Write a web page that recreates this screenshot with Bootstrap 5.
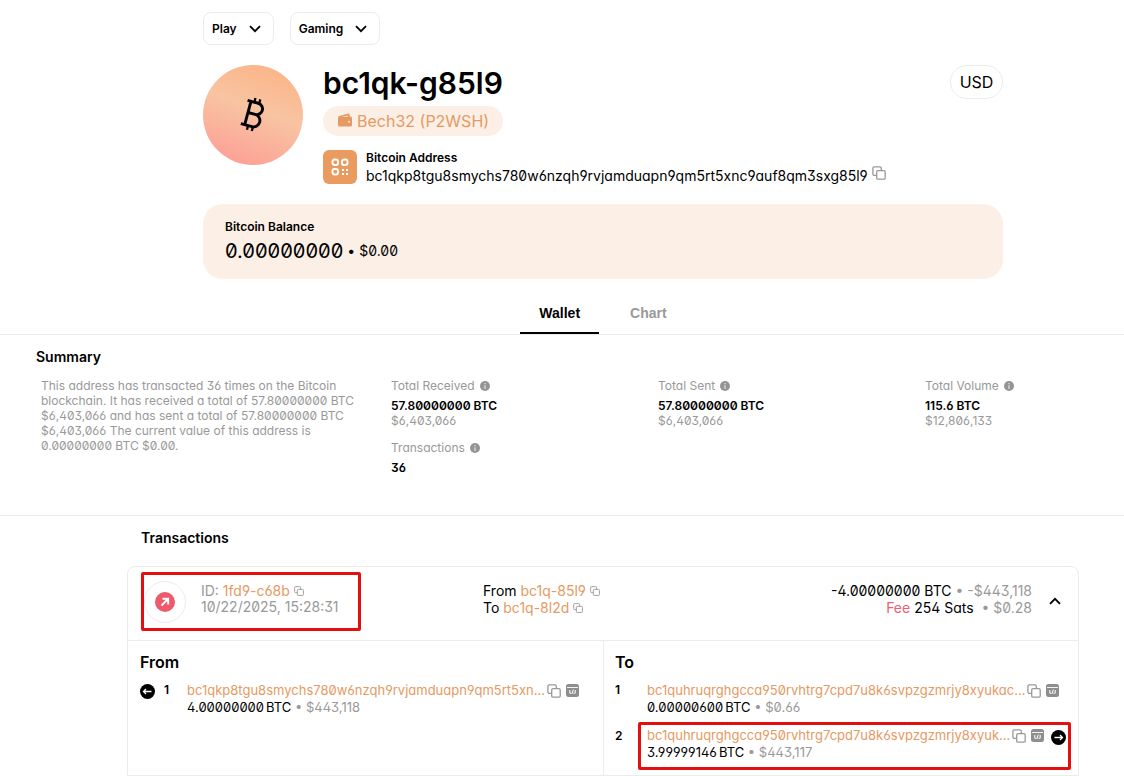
<!DOCTYPE html>
<html lang="en">
<head>
<meta charset="utf-8">
<meta name="viewport" content="width=device-width, initial-scale=1">
<title>bc1qk-g85l9 | Bitcoin Address</title>
<link href="https://cdn.jsdelivr.net/npm/bootstrap@5.3.0/dist/css/bootstrap.min.css" rel="stylesheet">
<style>
  :root { --line: #ececec; --muted: #999; --orange: #e59a63; --peach: #fcefe5; --pink: #ea5f75; }
  body { font-family: Inter, "Liberation Sans", sans-serif; color: #000; font-size: 14px; line-height: 16px; background: #fff; overflow-x: hidden; }
  a { color: var(--orange); text-decoration: none; }
  svg { display: block; flex: none; }
  .num { font-feature-settings: "zero" 1, "cv11" 1, "ss01" 1, "cv09" 1; }
  .muted { color: var(--muted); }
  .icon-btn { border: 0; background: none; padding: 0; color: var(--muted); flex: none; }
  /* content is centred in the space right of the side gutter */
  .gutter { padding-left: 82px; }
  .col-main { max-width: 800px; }
  .col-wide { max-width: 952px; }
  .fs-12 { font-size: 12px; }
  .pick { height: 33px; border: 1px solid var(--line); border-radius: 8px; background: #fff; font-size: 12px; font-weight: 600; padding: 0 12px 0 8px; gap: 12px; }
  .avatar { width: 100px; height: 100px; background: linear-gradient(20deg, #fd9d95 5%, #f8c4a2 55%, #fbb385 95%); flex: none; }
  .title { font-size: 30px; line-height: 37px; font-weight: 600; }
  .pill { height: 30px; padding: 0 14px; border-radius: 15px; background: var(--peach); color: var(--orange); font-size: 16px; gap: 4px; }
  .address { margin-top: 14px; gap: 9px; }
  .qr { width: 34px; height: 34px; border-radius: 6px; border: 0; padding: 0; background: #ea9b60; }
  .usd { height: 34px; width: 53px; border: 1px solid var(--line); border-radius: 17px; background: #fff; font-size: 16px; line-height: 30px; padding: 0; }
  .balance { background: var(--peach); border-radius: 20px; padding: 15px 22px; height: 75px; margin-top: 18px; }
  .balance-sum { gap: 4px; line-height: 32px; }
  .tabs { margin-top: 15px; border-bottom: 1px solid var(--line); }
  .tab-link { font: 700 14px/16px "Liberation Sans", sans-serif; color: var(--muted); padding: 11px 19px; border: 0; border-bottom: 2px solid transparent; background: none; }
  .tab-link.active { color: #000; border-bottom-color: #000; }
  .section-title { font-size: 14px; line-height: 17px; font-weight: 600; margin: 0; }
  .summary { padding: 13px 0 0 36px; height: 181px; border-bottom: 1px solid var(--line); }
  .stats { display: grid; grid-template-columns: 355px 267px 267px 1fr; margin-top: 13px; line-height: 15px; }
  .stats p { width: 330px; padding-left: 5px; }
  .stat-name { gap: 5px; margin-bottom: 5px; }
  .tx { border: 1px solid var(--line); border-radius: 8px 8px 0 0; }
  .tx-head { height: 74px; border-bottom: 1px solid var(--line); }
  .flagged { border: 3px solid #e60f0f; border-radius: 2px; }
  .tx-id { width: 220px; height: 59px; margin: 5px 0 0 13px; }
  .ring { width: 42px; height: 42px; margin-top: 6px; border: 1px solid var(--line); }
  .tx-mid { margin-left: 122px; }
  .tx-mid, .tx-sum { padding-top: 15px; line-height: 17px; }
  .copy-row { gap: 4px; }
  .side { height: 134px; padding: 11px 12px; }
  .side + .side { border-left: 1px solid var(--line); padding: 11px 7px 4px 11px; }
  .side h3 { font-size: 16px; line-height: 20px; font-weight: 600; margin: 0 0 10px; }
  .addr { font-size: 13px; line-height: 17px; }
  .addr-line { gap: 5px; }
  .addr-line a { margin-right: -3px; }
  .idx { font-size: 12px; line-height: 16px; font-weight: 600; }
  .sum { display: flex; gap: 2px; }
  .out-2 { height: 48px; margin-top: 6px; padding: 2px 2px 0 6px; }
</style>
</head>
<body>
<svg width="0" height="0" class="position-absolute" aria-hidden="true">
  <symbol id="copy" viewBox="0 0 14 14"><g fill="none" stroke="currentColor" stroke-width="1.3"><path d="M4.5 9.3H2.2A1.3 1.3 0 0 1 .9 8V2.2A1.3 1.3 0 0 1 2.2.9H8a1.3 1.3 0 0 1 1.3 1.3v2.3"/><rect x="4.7" y="4.700" width="8.500" height="8.500" rx="1.300"/></g></symbol>
  <symbol id="script" viewBox="0 0 13 13"><rect width="13" height="13" rx="2.5" fill="#8e8e8e"/><path d="M1 3.5h11" stroke="#fff" stroke-width=".9"/><path d="M3.800 6v3.200h1.600M9.200 6v3.200H7.600M7.300 5.600L5.900 10" fill="none" stroke="#fff" stroke-width="1"/></symbol>
  <symbol id="info" viewBox="0 0 10 10"><circle cx="5" cy="5" r="5" fill="#949494"/><path d="M5 2v1.300M5 4.200V8" stroke="#fff" stroke-width="1.200" opacity=".75"/></symbol>
  <symbol id="down" viewBox="0 0 12 8"><path d="M1 1.200l5 5 5-5" fill="none" stroke="#000" stroke-width="1.800"/></symbol>
  <symbol id="up" viewBox="0 0 12 8"><path d="M1 6.800l5-5 5 5" fill="none" stroke="#000" stroke-width="1.800"/></symbol>
</svg>

<header class="gutter">
  <div class="col-main mx-auto">
    <nav class="d-flex gap-3" style="padding-top:12px">
      <button class="pick d-flex align-items-center">Play <svg width="12" height="8"><use href="#down"/></svg></button>
      <button class="pick d-flex align-items-center">Gaming <svg width="12" height="8"><use href="#down"/></svg></button>
    </nav>
    <div class="d-flex" style="margin-top:20px">
      <div class="avatar rounded-circle d-flex align-items-center justify-content-center">
        <svg width="28" height="36" viewBox="0 0 28 36"><g transform="rotate(15 14 18)" fill="none" stroke="#000" stroke-width="2.900"><path d="M5 5.300h11a5.800 5.800 0 0 1 0 11.600H8.500M16 16.900a6.300 6.300 0 0 1 0 12.600H4.500M8.500 5.300v24.200"/><path d="M12 1v4.300M17 1v4.300M12 29.500v4.300M17 29.500v4.300" stroke-width="2.300"/></g></svg>
      </div>
      <div class="flex-grow-1 ms-3 ps-1">
        <h1 class="title m-0">bc1qk-g85l9</h1>
        <div class="pill d-inline-flex align-items-center mt-1">
          <svg width="16" height="16" viewBox="0 0 16 16"><path fill="currentColor" d="M1 5q0-1.500 1.300-1.900L10.500.7q2-.4 2.200 1.300v1.500h.8A1.500 1.500 0 0 1 15 5v7a1.500 1.500 0 0 1-1.500 1.500h-11A1.500 1.500 0 0 1 1 12z"/><path d="M4.500 3.700h6.500V2.500z" fill="#fcefe5"/><circle cx="12" cy="8.800" r="1" fill="#fcefe5"/></svg>
          <span>Bech32 (P2WSH)</span>
        </div>
        <div class="address d-flex">
          <button class="qr d-flex align-items-center justify-content-center" aria-label="Show QR code">
            <svg width="18" height="18" viewBox="0 0 18 18"><g fill="none" stroke="#fff" stroke-width="1.900"><rect x="1.500" y="1.500" width="5.500" height="5.500" rx="2"/><rect x="11" y="1.500" width="5.500" height="5.500" rx="2"/><rect x="1.500" y="11" width="5.500" height="5.500" rx="2"/></g><path d="M11 11h2v2h-2zM15 11h2v2h-2zM11 15h2v2h-2zM15 15h2v2h-2z" fill="#fff"/></svg>
          </button>
          <div>
            <div class="fs-12 fw-semibold">Bitcoin Address</div>
            <div class="d-flex num copy-row" style="line-height:20px"><span>bc1qkp8tgu8smychs780w6nzqh9rvjamduapn9qm5rt5xnc9auf8qm3sxg85l9</span>
              <button class="icon-btn align-self-start" aria-label="Copy address"><svg width="14" height="14"><use href="#copy"/></svg></button></div>
          </div>
        </div>
      </div>
      <button class="usd">USD</button>
    </div>
    <section class="balance">
      <div class="fs-12 fw-semibold">Bitcoin Balance</div>
      <div class="balance-sum num d-flex align-items-center"><span style="font-size:20px">0.00000000</span><span>•</span><span>$0.00</span></div>
    </section>
  </div>
</header>

<nav class="tabs gutter">
  <div class="d-flex justify-content-center" style="gap:12px">
    <button class="tab-link active">Wallet</button>
    <button class="tab-link">Chart</button>
  </div>
</nav>

<section class="summary">
  <h2 class="section-title">Summary</h2>
  <div class="stats num fs-12">
    <p class="muted m-0">This address has transacted 36 times on the Bitcoin blockchain. It has received a total of 57.80000000 BTC $6,403,066 and has sent a total of 57.80000000 BTC $6,403,066 The current value of this address is 0.00000000 BTC $0.00.</p>
    <div>
      <div class="muted d-flex align-items-center stat-name">Total Received <svg width="10" height="10"><use href="#info"/></svg></div>
      <div class="fw-semibold">57.80000000 BTC</div>
      <div class="muted">$6,403,066</div>
      <div class="muted d-flex align-items-center stat-name" style="margin-top:12px">Transactions <svg width="10" height="10"><use href="#info"/></svg></div>
      <div class="fw-semibold">36</div>
    </div>
    <div>
      <div class="muted d-flex align-items-center stat-name">Total Sent <svg width="10" height="10"><use href="#info"/></svg></div>
      <div class="fw-semibold">57.80000000 BTC</div>
      <div class="muted">$6,403,066</div>
    </div>
    <div>
      <div class="muted d-flex align-items-center stat-name">Total Volume <svg width="10" height="10"><use href="#info"/></svg></div>
      <div class="fw-semibold">115.6 BTC</div>
      <div class="muted">$12,806,133</div>
    </div>
  </div>
</section>

<section class="gutter">
  <div class="col-wide mx-auto" style="padding-top:13px">
    <h2 class="section-title mb-3 pb-1" style="margin-left:14px">Transactions</h2>
    <div class="tx">
      <div class="tx-head d-flex num">
        <div class="tx-id flagged d-flex">
          <div class="ring rounded-circle d-flex align-items-center justify-content-center">
            <svg width="20" height="20" viewBox="0 0 20 20"><circle cx="10" cy="10" r="10" fill="#ed5a6c"/><path d="M6.500 13.500l6.500-6.500M7.500 6.800h5.700v5.700" fill="none" stroke="#fff" stroke-width="1.900"/></svg>
          </div>
          <div class="muted" style="margin:8px 0 0 15px">
            <div class="d-flex align-items-center copy-row"><span>ID: <a href="#">1fd9-c68b</a></span><button class="icon-btn" aria-label="Copy ID"><svg width="10" height="10"><use href="#copy"/></svg></button></div>
            <div>10/22/2025, 15:28:31</div>
          </div>
        </div>
        <div class="tx-mid">
          <div class="d-flex align-items-center copy-row"><span>From <a href="#">bc1q-85l9</a></span><button class="icon-btn" aria-label="Copy sender"><svg width="10" height="10"><use href="#copy"/></svg></button></div>
          <div class="d-flex align-items-center copy-row"><span>To <a href="#">bc1q-8l2d</a></span><button class="icon-btn" aria-label="Copy recipient"><svg width="10" height="10"><use href="#copy"/></svg></button></div>
        </div>
        <div class="tx-sum ms-auto text-end">
          <div>-4.00000000 BTC <span class="muted">• -$443,118</span></div>
          <div><span style="color:var(--pink)">Fee</span> 254 Sats <span class="muted ms-1">• $0.28</span></div>
        </div>
        <button class="icon-btn align-self-start" style="margin:30px 17px 0" aria-label="Collapse"><svg width="12" height="8"><use href="#up"/></svg></button>
      </div>
      <div class="d-flex">
        <div class="side w-50">
          <h3>From</h3>
          <div class="d-flex num addr">
            <svg width="15" height="15" viewBox="0 0 15 15" style="margin-top:2px"><circle cx="7.500" cy="7.500" r="7.500"/><path d="M11.500 7.500h-8M6 5L3.500 7.500 6 10" fill="none" stroke="#fff" stroke-width="1.300"/></svg>
            <span class="idx" style="width:32px;padding-left:9px">1</span>
            <div>
              <div class="d-flex align-items-center addr-line"><a href="#">bc1qkp8tgu8smychs780w6nzqh9rvjamduapn9qm5rt5xn...</a>
                <button class="icon-btn" aria-label="Copy"><svg width="14" height="14"><use href="#copy"/></svg></button><button class="icon-btn" aria-label="Script"><svg width="13" height="13"><use href="#script"/></svg></button></div>
              <div class="sum"><span>4.00000000</span><span>BTC <span class="muted">• $443,118</span></span></div>
            </div>
          </div>
        </div>
        <div class="side w-50">
          <h3>To</h3>
          <div class="d-flex num addr">
            <span class="idx" style="width:32px">1</span>
            <div>
              <div class="d-flex align-items-center addr-line"><a href="#">bc1quhruqrghgcca950rvhtrg7cpd7u8k6svpzgzmrjy8xyukac...</a>
                <button class="icon-btn" aria-label="Copy"><svg width="14" height="14"><use href="#copy"/></svg></button><button class="icon-btn" aria-label="Script"><svg width="13" height="13"><use href="#script"/></svg></button></div>
              <div class="sum"><span>0.00000600</span><span>BTC <span class="muted">• $0.66</span></span></div>
            </div>
          </div>
          <div class="d-flex num addr">
            <span class="idx" style="width:23px;padding-top:12px">2</span>
            <div class="flagged out-2 d-flex flex-grow-1">
              <div>
                <div class="d-flex align-items-center addr-line"><a href="#">bc1quhruqrghgcca950rvhtrg7cpd7u8k6svpzgzmrjy8xyuk...</a>
                  <button class="icon-btn" aria-label="Copy"><svg width="14" height="14"><use href="#copy"/></svg></button><button class="icon-btn" aria-label="Script"><svg width="13" height="13"><use href="#script"/></svg></button></div>
                <div class="sum"><span>3.99999146</span><span>BTC <span class="muted">• $443,117</span></span></div>
              </div>
              <svg class="ms-auto" width="15" height="15" viewBox="0 0 15 15" style="margin-top:3px"><circle cx="7.500" cy="7.500" r="7.500"/><path d="M3.500 7.500h8M9 5l2.500 2.500L9 10" fill="none" stroke="#fff" stroke-width="1.300"/></svg>
            </div>
          </div>
        </div>
      </div>
    </div>
  </div>
</section>
<script src="https://cdn.jsdelivr.net/npm/bootstrap@5.3.0/dist/js/bootstrap.bundle.min.js"></script>
</body>
</html>
